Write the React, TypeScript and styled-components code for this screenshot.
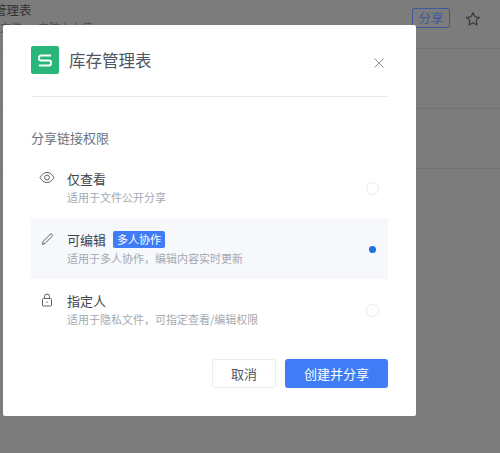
import React from "react"
import styled, { createGlobalStyle } from "styled-components"

const GlobalStyle = createGlobalStyle`
  html, body {
    margin: 0;
    padding: 0;
    background: #7c7c7c;
  }
  * {
    box-sizing: border-box;
  }
`

const Page = styled.div`
  position: relative;
  width: 500px;
  height: 453px;
  overflow: hidden;
  background: #7c7c7c;
  font-family: "Noto Sans CJK SC", "Liberation Sans", sans-serif;
`

const BackList = styled.div`
  display: flex;
  flex-direction: column;
`

const BackRow = styled.div<{ $height: number }>`
  display: flex;
  height: ${(p) => p.$height}px;
  border-bottom: 1px solid #737373;
  align-items: flex-start;
  padding: 8px 19px 0 0;
  gap: 15px;
`

const BackInfo = styled.div<{ $shift: number }>`
  flex: 1;
  margin-left: ${(p) => p.$shift}px;
  margin-top: -8px;
  white-space: nowrap;
`

const BackTitle = styled.div`
  font-size: 12.5px;
  line-height: 20px;
  color: #333;
`

const BackSub = styled.div`
  margin-top: -1px;
  padding-left: 6px;
  font-size: 11px;
  line-height: 16px;
  color: #4a4a4a;
`

const ShareTag = styled.div`
  width: 38px;
  height: 20px;
  border: 1px solid #3c5a9e;
  border-radius: 2px;
  color: #3c5a9e;
  font-size: 12.5px;
  line-height: 18px;
  text-align: center;
`

const Star = styled.svg`
  width: 16px;
  height: 16px;
  margin-top: 3px;
`

const Modal = styled.div`
  position: absolute;
  left: 3px;
  top: 25px;
  width: 413px;
  height: 391px;
  background: #fff;
  border-radius: 2px;
  padding: 21px 28px 0 28px;
  display: flex;
  flex-direction: column;
`

const Header = styled.div`
  display: flex;
  align-items: center;
  height: 51px;
  border-bottom: 1px solid #e8e8e8;
  padding-bottom: 22px;
`

const Logo = styled.div`
  width: 28px;
  height: 28px;
  border-radius: 2px;
  background: #28b67a;
  display: flex;
  align-items: center;
  justify-content: center;
`

const Title = styled.div`
  flex: 1;
  margin-left: 10px;
  font-size: 16.5px;
  line-height: 28px;
  color: #50565f;
`

const CloseIcon = styled.svg`
  width: 10px;
  height: 10px;
  margin: 5px 4px 0 0;
`

const SectionLabel = styled.div`
  margin-top: 32px;
  font-size: 13px;
  line-height: 18px;
  color: #6b727c;
`

const Options = styled.div`
  display: flex;
  flex-direction: column;
  margin-top: 10px;
`

const Option = styled.div<{ $active?: boolean }>`
  display: flex;
  height: 61px;
  padding: 12px 9px 0 8px;
  background: ${(p) => (p.$active ? "#f6f8fc" : "#fff")};
`

const OptionIcon = styled.svg`
  width: 16px;
  height: 16px;
  flex: none;
  margin-top: 1px;
`

const OptionBody = styled.div`
  flex: 1;
  margin-left: 12px;
`

const OptionTitle = styled.div`
  display: flex;
  align-items: center;
  gap: 7px;
  font-size: 13px;
  line-height: 19px;
  color: #3f444c;
`

const Badge = styled.span`
  height: 17px;
  padding: 0 4px;
  border-radius: 2px;
  background: #3f7cf5;
  color: #fff;
  font-size: 11px;
  line-height: 17px;
`

const OptionDesc = styled.div`
  margin-top: 1px;
  font-size: 11px;
  line-height: 16px;
  color: #a4a9b1;
`

const Radio = styled.div<{ $checked?: boolean }>`
  width: 13px;
  height: 13px;
  margin-top: 13px;
  border-radius: 50%;
  border: ${(p) => (p.$checked ? "3px solid #f6f8fc" : "1px solid #eaeaea")};
  background: ${(p) => (p.$checked ? "#1f6fe5" : "#fff")};
`

const Footer = styled.div`
  display: flex;
  justify-content: flex-end;
  gap: 9px;
  margin-top: 19px;
`

const CancelButton = styled.button`
  width: 64px;
  height: 29px;
  border: 1px solid #ececec;
  border-radius: 3px;
  background: #fff;
  font: inherit;
  font-size: 13px;
  color: #50565f;
  padding: 0;
`

const PrimaryButton = styled.button`
  width: 103px;
  height: 29px;
  border: none;
  border-radius: 3px;
  background: #3f7cf5;
  font: inherit;
  font-size: 13px;
  color: #fff;
  padding: 0;
`

const App = () => {
  return <Page>
    <GlobalStyle />
    <BackList>
      <BackRow $height={49}>
        <BackInfo $shift={-6}>
          <BackTitle>管理表</BackTitle>
          <BackSub>文件 · 电脑上上传</BackSub>
        </BackInfo>
        <ShareTag>分享</ShareTag>
        <Star viewBox="0 0 24 24" fill="none" stroke="#3a3a3a" strokeWidth="1.8" strokeLinejoin="round">
          <path d="M12 2.500l2.900 6.200 6.600.9-4.800 4.600 1.200 6.700L12 17.700 6.100 21l1.200-6.700-4.800-4.600 6.600-.9z" />
        </Star>
      </BackRow>
      <BackRow $height={60} />
      <BackRow $height={60} />
    </BackList>
    <Modal>
      <Header>
        <Logo>
          <svg width="16" height="13" viewBox="0 0 16 13" fill="none" stroke="#fff" strokeWidth="2" strokeLinejoin="round">
            <path d="M14 1.500H4a2 2 0 0 0-2 2v1a2 2 0 0 0 2 2h8a2 2 0 0 1 2 2v1a2 2 0 0 1-2 2H2" />
          </svg>
        </Logo>
        <Title>库存管理表</Title>
        <CloseIcon viewBox="0 0 10 10" fill="none" stroke="#8f949b" strokeWidth="1">
          <path d="M.5.5l9 9M9.500.5l-9 9" />
        </CloseIcon>
      </Header>
      <SectionLabel>分享链接权限</SectionLabel>
      <Options>
        <Option>
          <OptionIcon viewBox="0 0 16 16" fill="none" stroke="#5d626a" strokeWidth="1">
            <path d="M1 7.500c2-3.500 4.300-5 7-5s5 1.500 7 5c-2 3.500-4.300 5-7 5s-5-1.500-7-5z" />
            <circle cx="8" cy="7.500" r="2.400" />
          </OptionIcon>
          <OptionBody>
            <OptionTitle>仅查看</OptionTitle>
            <OptionDesc>适用于文件公开分享</OptionDesc>
          </OptionBody>
          <Radio />
        </Option>
        <Option $active>
          <OptionIcon viewBox="0 0 16 16" fill="none" stroke="#5d626a" strokeWidth="1" strokeLinejoin="round">
            <path d="M3.500 13.500l.8-3.300 6.700-6.700a1.300 1.300 0 0 1 2 0 1.300 1.300 0 0 1 0 2l-6.700 6.700z" />
          </OptionIcon>
          <OptionBody>
            <OptionTitle>可编辑<Badge>多人协作</Badge></OptionTitle>
            <OptionDesc>适用于多人协作，编辑内容实时更新</OptionDesc>
          </OptionBody>
          <Radio $checked />
        </Option>
        <Option>
          <OptionIcon viewBox="0 0 16 16" fill="none" stroke="#5d626a" strokeWidth="1">
            <rect x="3.500" y="6.500" width="9" height="7.500" rx="1" />
            <path d="M5.500 6.500V4.500a2.500 2.500 0 0 1 5 0v2" />
            <path d="M8 9.500v1.500" />
          </OptionIcon>
          <OptionBody>
            <OptionTitle>指定人</OptionTitle>
            <OptionDesc>适用于隐私文件，可指定查看/编辑权限</OptionDesc>
          </OptionBody>
          <Radio />
        </Option>
      </Options>
      <Footer>
        <CancelButton>取消</CancelButton>
        <PrimaryButton>创建并分享</PrimaryButton>
      </Footer>
    </Modal>
  </Page>
}

export default App
